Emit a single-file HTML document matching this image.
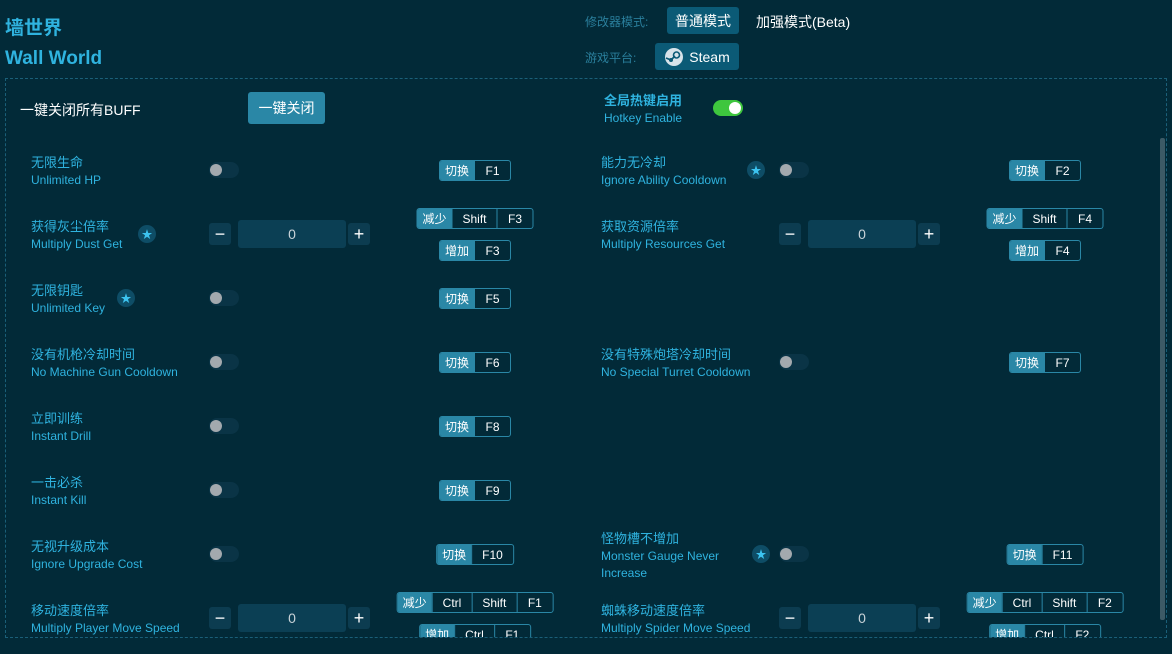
<!DOCTYPE html>
<html><head><meta charset="utf-8"><style>
*{box-sizing:border-box;margin:0;padding:0}
body{width:1172px;height:654px;background:#022a38;font-family:"Liberation Sans","Noto Sans CJK SC",sans-serif;position:relative;overflow:hidden;color:#2fb3df}
.a{position:absolute}
.t1{font-size:19px;font-weight:bold;color:#2fb3df}
.small{font-size:12px;color:#2a7f9c}
.btn{background:#0b5a76;color:#fff;border-radius:3px;font-size:14px;display:flex;align-items:center;justify-content:center}
.box{left:5px;top:78px;width:1162px;height:560px;border:1px dashed #1a5f78;overflow:hidden}
.cn{font-size:13px;color:#2fb3df;line-height:17px}
.en{font-size:12px;color:#2fb3df;line-height:17px}
.tg{width:30px;height:16px;border-radius:8px;background:#0a3446}
.tg::after{content:"";position:absolute;left:1px;top:2px;width:12px;height:12px;border-radius:50%;background:#a3a9ae}
.kg{display:flex;height:21px;border:1px solid #2a87a6;border-radius:3px;font-size:12px;color:#fff;overflow:hidden;transform:translateX(-50%)}
.kg span{display:flex;align-items:center;justify-content:center;border-left:1px solid #2a87a6;padding:0 10px;min-width:36px}
.kg span:first-child{background:#2a87a6;border:none;min-width:34px;padding:0 2px}
.star{width:18px;height:18px;border-radius:50%;background:#0e4d66;display:flex;align-items:center;justify-content:center;color:#3cc3f0;font-size:11px}
.pm{width:22px;height:22px;background:#0c3c50;border-radius:3px;color:#fff;font-size:18px;display:flex;align-items:center;justify-content:center;line-height:1}
.inp{width:108px;height:28px;background:#0b3f54;border-radius:3px;color:#c9d3d8;font-size:14px;display:flex;align-items:center;justify-content:center}
</style></head><body>
<div class="a t1" style="left:5px;top:13px">墙世界</div>
<div class="a t1" style="left:5px;top:48px">Wall World</div>
<div class="a small" style="left:585px;top:13px">修改器模式:</div>
<div class="a btn" style="left:667px;top:7px;width:72px;height:27px">普通模式</div>
<div class="a" style="left:756px;top:12px;font-size:14px;color:#fff">加强模式(Beta)</div>
<div class="a small" style="left:585px;top:49px">游戏平台:</div>
<div class="a btn" style="left:655px;top:43px;width:84px;height:27px"><svg width="20" height="20" viewBox="0 0 20 20" style="margin-right:5px"><circle cx="10" cy="10" r="9" fill="#d7e3ea"/><circle cx="12.5" cy="8" r="3" fill="none" stroke="#0b5a76" stroke-width="1.6"/><circle cx="7" cy="13" r="2" fill="#0b5a76"/><path d="M2 11 L7 13 L11 9" stroke="#0b5a76" stroke-width="1.6" fill="none"/></svg>Steam</div>
<div class="a box">
<div style="position:relative;left:-6px;top:-79px;width:1172px;height:654px">
<div class="a" style="left:20px;top:100px;font-size:14px;color:#fff">一键关闭所有BUFF</div>
<div class="a btn" style="left:248px;top:92px;width:77px;height:32px;background:#2a87a6">一键关闭</div>
<div class="a cn" style="left:604px;top:92px;font-weight:bold">全局热键启用</div>
<div class="a en" style="left:604px;top:110px">Hotkey Enable</div>
<div class="a" style="left:713px;top:100px;width:30px;height:16px;border-radius:8px;background:#3ec63e"><div style="position:absolute;right:2px;top:2px;width:12px;height:12px;border-radius:50%;background:#fff"></div></div>
<div class="a" style="left:1160px;top:138px;width:5px;height:482px;background:#3c5a66;border-radius:2px"></div>

<div class="a cn" style="left:31px;top:154px">无限生命</div><div class="a en" style="left:31px;top:172px">Unlimited HP</div>
<div class="a tg" style="left:209px;top:162px"></div>
<div class="a kg" style="left:475px;top:160px"><span>切换</span><span>F1</span></div>

<div class="a cn" style="left:31px;top:218px">获得灰尘倍率</div><div class="a en" style="left:31px;top:236px">Multiply Dust Get</div>
<div class="a star" style="left:138px;top:225px">★</div>
<div class="a pm" style="left:209px;top:223px">−</div><div class="a inp" style="left:238px;top:220px">0</div><div class="a pm" style="left:348px;top:223px">+</div>
<div class="a kg" style="left:475px;top:208px"><span>减少</span><span>Shift</span><span>F3</span></div>
<div class="a kg" style="left:475px;top:240px"><span>增加</span><span>F3</span></div>

<div class="a cn" style="left:31px;top:282px">无限钥匙</div><div class="a en" style="left:31px;top:300px">Unlimited Key</div>
<div class="a star" style="left:117px;top:289px">★</div>
<div class="a tg" style="left:209px;top:290px"></div>
<div class="a kg" style="left:475px;top:288px"><span>切换</span><span>F5</span></div>

<div class="a cn" style="left:31px;top:346px">没有机枪冷却时间</div><div class="a en" style="left:31px;top:364px">No Machine Gun Cooldown</div>
<div class="a tg" style="left:209px;top:354px"></div>
<div class="a kg" style="left:475px;top:352px"><span>切换</span><span>F6</span></div>

<div class="a cn" style="left:31px;top:410px">立即训练</div><div class="a en" style="left:31px;top:428px">Instant Drill</div>
<div class="a tg" style="left:209px;top:418px"></div>
<div class="a kg" style="left:475px;top:416px"><span>切换</span><span>F8</span></div>

<div class="a cn" style="left:31px;top:474px">一击必杀</div><div class="a en" style="left:31px;top:492px">Instant Kill</div>
<div class="a tg" style="left:209px;top:482px"></div>
<div class="a kg" style="left:475px;top:480px"><span>切换</span><span>F9</span></div>

<div class="a cn" style="left:31px;top:538px">无视升级成本</div><div class="a en" style="left:31px;top:556px">Ignore Upgrade Cost</div>
<div class="a tg" style="left:209px;top:546px"></div>
<div class="a kg" style="left:475px;top:544px"><span>切换</span><span>F10</span></div>

<div class="a cn" style="left:31px;top:602px">移动速度倍率</div><div class="a en" style="left:31px;top:620px">Multiply Player Move Speed</div>
<div class="a pm" style="left:209px;top:607px">−</div><div class="a inp" style="left:238px;top:604px">0</div><div class="a pm" style="left:348px;top:607px">+</div>
<div class="a kg" style="left:475px;top:592px"><span>减少</span><span>Ctrl</span><span>Shift</span><span>F1</span></div>
<div class="a kg" style="left:475px;top:624px"><span>增加</span><span>Ctrl</span><span>F1</span></div>

<div class="a cn" style="left:601px;top:154px">能力无冷却</div><div class="a en" style="left:601px;top:172px">Ignore Ability Cooldown</div>
<div class="a star" style="left:747px;top:161px">★</div>
<div class="a tg" style="left:779px;top:162px"></div>
<div class="a kg" style="left:1045px;top:160px"><span>切换</span><span>F2</span></div>

<div class="a cn" style="left:601px;top:218px">获取资源倍率</div><div class="a en" style="left:601px;top:236px">Multiply Resources Get</div>
<div class="a pm" style="left:779px;top:223px">−</div><div class="a inp" style="left:808px;top:220px">0</div><div class="a pm" style="left:918px;top:223px">+</div>
<div class="a kg" style="left:1045px;top:208px"><span>减少</span><span>Shift</span><span>F4</span></div>
<div class="a kg" style="left:1045px;top:240px"><span>增加</span><span>F4</span></div>

<div class="a cn" style="left:601px;top:346px">没有特殊炮塔冷却时间</div><div class="a en" style="left:601px;top:364px">No Special Turret Cooldown</div>
<div class="a tg" style="left:779px;top:354px"></div>
<div class="a kg" style="left:1045px;top:352px"><span>切换</span><span>F7</span></div>

<div class="a cn" style="left:601px;top:530px">怪物槽不增加</div><div class="a en" style="left:601px;top:548px;width:140px">Monster Gauge Never Increase</div>
<div class="a star" style="left:752px;top:545px">★</div>
<div class="a tg" style="left:779px;top:546px"></div>
<div class="a kg" style="left:1045px;top:544px"><span>切换</span><span>F11</span></div>

<div class="a cn" style="left:601px;top:602px">蜘蛛移动速度倍率</div><div class="a en" style="left:601px;top:620px">Multiply Spider Move Speed</div>
<div class="a pm" style="left:779px;top:607px">−</div><div class="a inp" style="left:808px;top:604px">0</div><div class="a pm" style="left:918px;top:607px">+</div>
<div class="a kg" style="left:1045px;top:592px"><span>减少</span><span>Ctrl</span><span>Shift</span><span>F2</span></div>
<div class="a kg" style="left:1045px;top:624px"><span>增加</span><span>Ctrl</span><span>F2</span></div>
</div></div>
</body></html>
